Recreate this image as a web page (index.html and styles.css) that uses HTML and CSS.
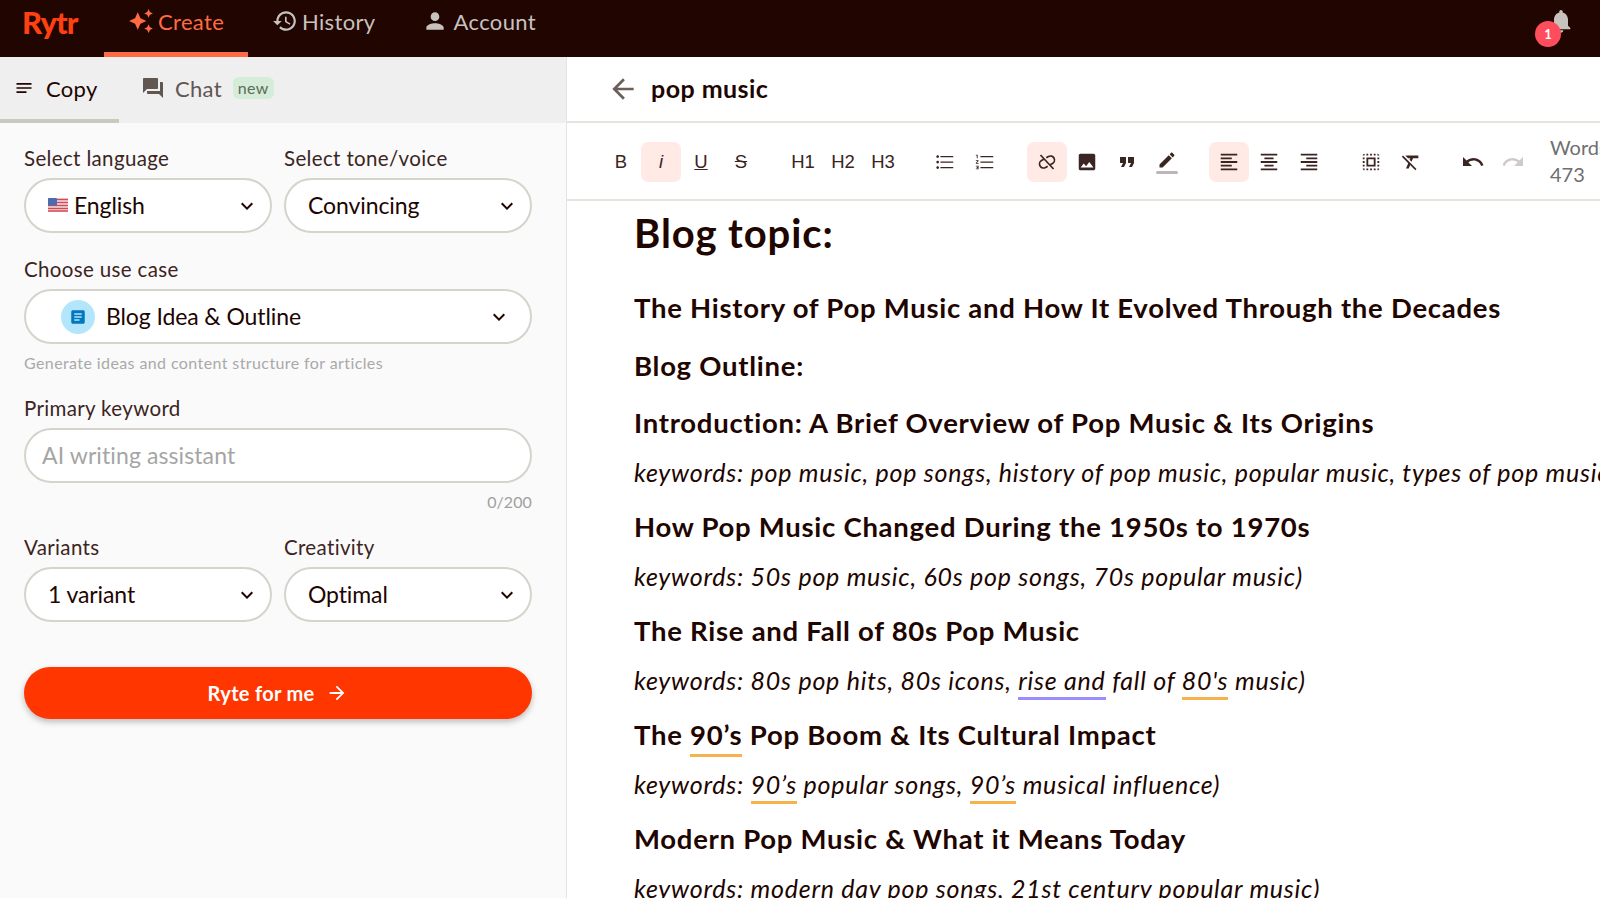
FILE: index.html
```
<!DOCTYPE html>
<html lang="en">
<head>
<meta charset="utf-8">
<title>Rytr</title>
<link rel="stylesheet" href="styles.css">
</head>
<body>
<header class="topbar">
  <div class="logo">Rytr</div>
  <nav class="mainnav">
    <a class="navitem active"><svg class="ic26" viewBox="0 0 24 24"><path d="M19 9l1.25-2.75L23 5l-2.75-1.25L19 1l-1.25 2.75L15 5l2.75 1.25L19 9zm-7.5.5L9 4 6.5 9.5 1 12l5.5 2.5L9 20l2.5-5.5L17 12l-5.5-2.5zM19 15l-1.25 2.75L15 19l2.75 1.25L19 23l1.25-2.75L23 19l-2.75-1.25L19 15z"/></svg>Create</a>
    <a class="navitem"><svg class="ic26" viewBox="0 0 24 24"><path d="M13 3c-4.97 0-9 4.03-9 9H1l3.89 3.89.07.14L9 12H6c0-3.87 3.13-7 7-7s7 3.13 7 7-3.13 7-7 7c-1.93 0-3.68-.79-4.94-2.06l-1.42 1.42C8.27 19.99 10.51 21 13 21c4.97 0 9-4.03 9-9s-4.03-9-9-9zm-1 5v5l4.28 2.54.72-1.21-3.5-2.08V8H12z"/></svg>History</a>
    <a class="navitem acct"><svg class="ic26" viewBox="0 0 24 24"><path d="M12 12c2.21 0 4-1.79 4-4s-1.79-4-4-4-4 1.79-4 4 1.79 4 4 4zm0 2c-2.67 0-8 1.34-8 4v2h16v-2c0-2.66-5.33-4-8-4z"/></svg>Account</a>
  </nav>
  <div class="bell">
    <svg class="bellicon" viewBox="0 0 24 24"><path d="M12 22c1.1 0 2-.9 2-2h-4c0 1.1.89 2 2 2zm6-6v-5c0-3.07-1.64-5.64-4.5-6.32V4c0-.83-.67-1.5-1.5-1.5s-1.5.67-1.5 1.5v.68C7.63 5.36 6 7.92 6 11v5l-2 2v1h16v-1l-2-2z"/></svg>
    <span class="badge">1</span>
  </div>
</header>
<div class="app">
  <aside class="side">
    <div class="subtabs">
      <a class="subtab on"><svg class="ic20" viewBox="0 0 24 24"><path d="M3 18h12v-2H3v2zM3 6v2h18V6H3zm0 7h18v-2H3v2z"/></svg>Copy</a>
      <a class="subtab"><svg class="ic24" viewBox="0 0 24 24"><path d="M21 6h-2v9H6v2c0 .55.45 1 1 1h11l4 4V7c0-.55-.45-1-1-1zm-4 6V3c0-.55-.45-1-1-1H3c-.55 0-1 .45-1 1v14l4-4h10c.55 0 1-.45 1-1z"/></svg>Chat<span class="new">new</span></a>
    </div>
    <form class="form">
      <div class="row">
        <div class="field">
          <label class="lbl">Select language</label>
          <div class="pill"><svg class="flag" viewBox="0 0 20 14"><rect width="20" height="14" rx="1.5" fill="#e8e4ea"/><path d="M0 1.5h20M0 4.5h20M0 7.500h20M0 10.500h20M0 13h20" stroke="#d9474f" stroke-width="1.500"/><rect width="9" height="7.500" rx="1" fill="#4a6cb0"/></svg><span>English</span><svg class="chev" viewBox="0 0 24 24"><path d="M16.590 8.590L12 13.170 7.410 8.590 6 10l6 6 6-6z"/></svg></div>
        </div>
        <div class="field">
          <label class="lbl">Select tone/voice</label>
          <div class="pill"><span>Convincing</span><svg class="chev" viewBox="0 0 24 24"><path d="M16.590 8.590L12 13.170 7.410 8.590 6 10l6 6 6-6z"/></svg></div>
        </div>
      </div>
      <div class="field gap1">
        <label class="lbl">Choose use case</label>
        <div class="pill usecase"><span class="round"><svg class="ic18" viewBox="0 0 24 24"><path d="M19 3H5c-1.100 0-2 .9-2 2v14c0 1.100.9 2 2 2h14c1.100 0 2-.9 2-2V5c0-1.100-.9-2-2-2zm-5 14H7v-2h7v2zm3-4H7v-2h10v2zm0-4H7V7h10v2z"/></svg></span><span>Blog Idea &amp; Outline</span><svg class="chev" viewBox="0 0 24 24"><path d="M16.590 8.590L12 13.170 7.410 8.590 6 10l6 6 6-6z"/></svg></div>
        <div class="help">Generate ideas and content structure for articles</div>
      </div>
      <div class="field gap2">
        <label class="lbl">Primary keyword</label>
        <div class="pill keyword">AI writing assistant</div>
        <div class="count">0/200</div>
      </div>
      <div class="row gap2">
        <div class="field">
          <label class="lbl">Variants</label>
          <div class="pill"><span>1 variant</span><svg class="chev" viewBox="0 0 24 24"><path d="M16.590 8.590L12 13.170 7.410 8.590 6 10l6 6 6-6z"/></svg></div>
        </div>
        <div class="field">
          <label class="lbl">Creativity</label>
          <div class="pill"><span>Optimal</span><svg class="chev" viewBox="0 0 24 24"><path d="M16.590 8.590L12 13.170 7.410 8.590 6 10l6 6 6-6z"/></svg></div>
        </div>
      </div>
      <div class="cta">Ryte for me<svg class="ic22" viewBox="0 0 24 24"><path d="M12 4l-1.410 1.410L16.170 11H4v2h12.170l-5.580 5.590L12 20l8-8z"/></svg></div>
    </form>
  </aside>
  <main class="doc">
    <div class="dochead"><svg class="back" viewBox="0 0 24 24"><path d="M20 11H7.830l5.590-5.590L12 4l-8 8 8 8 1.410-1.410L7.830 13H20v-2z"/></svg><h2 class="doctitle">pop music</h2></div>
    <div class="toolbar">
      <div class="grp">
        <span class="tb">B</span><span class="tb sel it">i</span><span class="tb ul">U</span><span class="tb st">S</span>
      </div>
      <div class="grp">
        <span class="tb">H1</span><span class="tb">H2</span><span class="tb">H3</span>
      </div>
      <div class="grp">
        <span class="tb"><svg class="ic22" viewBox="0 0 24 24"><path d="M4 10.500c-.83 0-1.500.67-1.500 1.500s.67 1.500 1.500 1.500 1.500-.67 1.500-1.500-.67-1.500-1.500-1.500zm0-6c-.83 0-1.500.67-1.500 1.500S3.170 7.500 4 7.500 5.500 6.830 5.500 6 4.830 4.500 4 4.500zm0 12c-.83 0-1.500.68-1.500 1.500s.68 1.500 1.500 1.500 1.500-.68 1.500-1.500-.67-1.500-1.500-1.500zM7 18.800h14v-1.300H7v1.300zm0-6h14v-1.300H7v1.300zm0-7.300v1.300h14V5.500H7z"/></svg></span>
        <span class="tb"><svg class="ic22" viewBox="0 0 24 24"><path d="M2 17h2v.5H3v1h1v.5H2v1h3v-4H2v1zm1-9h1V4H2v1h1v3zm-1 3h1.800L2 13.100v.9h3v-1H3.200L5 10.900V10H2v1zm5-5.500v1.300h14V5.500H7zm0 13.300h14v-1.300H7v1.300zm0-6h14v-1.300H7v1.300z"/></svg></span>
      </div>
      <div class="grp">
        <span class="tb sel"><svg class="ic24 strokeic" viewBox="0 0 24 24"><g transform="rotate(-30 12 12)"><path d="M10.500 8H8a4 4 0 0 0 0 8h2.500"/><path d="M13.500 8H16a4 4 0 0 1 0 8h-2.500"/></g><path d="M5.500 5l13 14"/></svg></span>
        <span class="tb"><svg class="ic22" viewBox="0 0 24 24"><path d="M21 19V5c0-1.100-.9-2-2-2H5c-1.100 0-2 .9-2 2v14c0 1.100.9 2 2 2h14c1.100 0 2-.9 2-2zM8.500 13.500l2.500 3.010L14.500 12l4.500 6H5l3.500-4.500z"/></svg></span>
        <span class="tb"><svg class="ic24" viewBox="0 0 24 24"><path d="M6 17h3l2-4V7H5v6h3zm8 0h3l2-4V7h-6v6h3z"/></svg></span>
        <span class="tb pen"><svg class="ic20" viewBox="0 0 24 24"><path d="M3 17.250V21h3.750L17.810 9.940l-3.750-3.750L3 17.250zM20.710 7.040c.39-.39.39-1.020 0-1.410l-2.340-2.340c-.39-.39-1.020-.39-1.410 0l-1.830 1.830 3.750 3.750 1.830-1.830z"/></svg><i class="penbar"></i></span>
      </div>
      <div class="grp">
        <span class="tb sel"><svg class="ic22" viewBox="0 0 24 24"><path d="M15 15H3v2h12v-2zm0-8H3v2h12V7zM3 13h18v-2H3v2zm0 8h18v-2H3v2zM3 3v2h18V3H3z"/></svg></span>
        <span class="tb"><svg class="ic22" viewBox="0 0 24 24"><path d="M7 15v2h10v-2H7zm-4 6h18v-2H3v2zm0-8h18v-2H3v2zm4-6v2h10V7H7zM3 3v2h18V3H3z"/></svg></span>
        <span class="tb"><svg class="ic22" viewBox="0 0 24 24"><path d="M3 21h18v-2H3v2zm6-4h12v-2H9v2zm-6-4h18v-2H3v2zm6-4h12V7H9v2zM3 3v2h18V3H3z"/></svg></span>
      </div>
      <div class="grp">
        <span class="tb"><svg class="ic22" viewBox="0 0 24 24"><path d="M3 5h2V3c-1.100 0-2 .9-2 2zm0 8h2v-2H3v2zm4 8h2v-2H7v2zM3 9h2V7H3v2zm10-6h-2v2h2V3zm6 0v2h2c0-1.100-.9-2-2-2zM5 21v-2H3c0 1.100.9 2 2 2zm-2-4h2v-2H3v2zM9 3H7v2h2V3zm2 18h2v-2h-2v2zm8-8h2v-2h-2v2zm0 8c1.100 0 2-.9 2-2h-2v2zm0-12h2V7h-2v2zm0 8h2v-2h-2v2zm-4 4h2v-2h-2v2zm0-16h2V3h-2v2zM7 17h10V7H7v10zm2-8h6v6H9V9z"/></svg></span>
        <span class="tb"><svg class="ic22" viewBox="0 0 24 24"><path d="M3.270 5L2 6.270l6.970 6.970L6.500 19h3l1.570-3.660L16.730 21 18 19.730 3.550 5.270 3.270 5zM6 5v.18L8.820 8h2.400l-.72 1.680 2.100 2.100L14.210 8H20V5H6z"/></svg></span>
      </div>
      <div class="grp">
        <span class="tb"><svg class="ic24" viewBox="0 0 24 24"><path d="M12.500 8c-2.650 0-5.050.99-6.900 2.600L2 7v9h9l-3.620-3.620c1.390-1.160 3.160-1.880 5.120-1.880 3.540 0 6.550 2.310 7.600 5.500l2.370-.78C21.080 11.030 17.150 8 12.500 8z"/></svg></span>
        <span class="tb off"><svg class="ic24" viewBox="0 0 24 24"><path d="M18.400 10.600C16.550 8.990 14.150 8 11.500 8c-4.650 0-8.580 3.030-9.960 7.220L3.900 16c1.050-3.190 4.050-5.500 7.600-5.500 1.950 0 3.730.72 5.120 1.880L13 16h9V7l-3.600 3.600z"/></svg></span>
      </div>
      <div class="words">Words<br>473</div>
    </div>
    <article class="content">
      <h1>Blog topic:</h1>
      <h3>The History of Pop Music and How It Evolved Through the Decades</h3>
      <h3>Blog Outline:</h3>
      <h3>Introduction: A Brief Overview of Pop Music &amp; Its Origins</h3>
      <p>keywords: pop music, pop songs, history of pop music, popular music, types of pop music)</p>
      <h3>How Pop Music Changed During the 1950s to 1970s</h3>
      <p>keywords: 50s pop music, 60s pop songs, 70s popular music)</p>
      <h3>The Rise and Fall of 80s Pop Music</h3>
      <p>keywords: 80s pop hits, 80s icons, <span class="gb">rise and</span> fall of <span class="gy">80's</span> music)</p>
      <h3>The <span class="gy">90’s</span> Pop Boom &amp; Its Cultural Impact</h3>
      <p>keywords: <span class="gy">90’s</span> popular songs, <span class="gy">90’s</span> musical influence)</p>
      <h3>Modern Pop Music &amp; What it Means Today</h3>
      <p>keywords: modern day pop songs, 21st century popular music)</p>
    </article>
  </main>
</div>
</body>
</html>
```
FILE: styles.css
```
* { box-sizing: border-box; }
html, body { margin: 0; height: 100%; overflow: hidden; }
body { font-family: "Lato", "Noto Sans", sans-serif; color: #200500; background: #fff; display: flex; flex-direction: column; height: 898px; }
svg { fill: currentColor; flex: none; display: block; }
.ic18 { width: 18px; height: 18px; }
.ic20 { width: 20px; height: 20px; }
.ic22 { width: 22px; height: 22px; }
.ic24 { width: 24px; height: 24px; }
.ic26 { width: 26px; height: 26px; }
.strokeic { fill: none; stroke: currentColor; stroke-width: 1.7; }

.topbar { height: 57px; flex: none; background: #200500; display: flex; align-items: stretch; position: relative; }
.logo { width: 104px; padding: 2px 0 0 22px; font-size: 31px; font-weight: 900; color: #ff4010; letter-spacing: -1px; line-height: 40px; }
.mainnav { display: flex; }
.navitem { display: flex; align-items: center; gap: 4px; padding: 0 24px; font-size: 22px; color: #c8c2be; height: 57px; padding-bottom: 15px; letter-spacing: .35px; }
.navitem.active { color: #ff6b42; border-bottom: 5px solid #ff6b42; padding-bottom: 10px; width: 144px; }
.acct { gap: 6px; margin-left: -2px; }
.bell { position: absolute; left: 1547px; top: 7px; width: 40px; height: 40px; color: #c8c2be; }
.bellicon { width: 28px; height: 28px; position: absolute; left: 0; top: 0; }
.badge { position: absolute; left: -12px; top: 14px; width: 26px; height: 26px; border-radius: 50%; background: #ff4d5e; color: #fff; font-size: 13px; font-weight: 700; display: flex; align-items: center; justify-content: center; }

.app { flex: 1; display: flex; min-height: 0; }
.side { width: 567px; flex: none; background: #fafafa; border-right: 1px solid #e6e4df; display: flex; flex-direction: column; }
.subtabs { height: 66px; flex: none; background: #efefef; display: flex; position: relative; }
.subtab { display: flex; align-items: center; gap: 10px; font-size: 22px; color: #615650; padding-bottom: 4px; margin-left: 22px; letter-spacing: .3px; }
.subtab.on { color: #200500; width: 119px; margin-left: 0; padding-left: 14px; gap: 12px; border-bottom: 4px solid #c9c9bd; padding-bottom: 0; }
.new { background: #d5ecd8; color: #5c6b5a; font-size: 16px; padding: 2px 5px; border-radius: 6px; margin-left: 1px; line-height: 18px; }

.form { padding: 23px 34px 0 24px; display: flex; flex-direction: column; }
.row { display: flex; gap: 12px; }
.row .field { width: 248px; }
.field { display: flex; flex-direction: column; }
.lbl { font-size: 20.500px; line-height: 24px; margin-bottom: 8px; color: #3b2522; letter-spacing: .35px; }
.pill { height: 55px; border: 2px solid #d5d3cb; border-radius: 28px; background: #fff; display: flex; align-items: center; padding: 0 11px 2px 22px; font-size: 23px; color: #200500; letter-spacing: -.1px; }
.pill > span:not(.round) { flex: 1; }
.chev { width: 24px; height: 24px; margin-top: 2px; }
.flag { width: 20px; height: 14px; margin-right: 6px; }
.gap1 { margin-top: 24px; }
.usecase { padding-left: 35px; padding-right: 19px; }
.round { width: 34px; height: 34px; border-radius: 50%; background: #b3e5fc; color: #0277bd; display: flex; align-items: center; justify-content: center; margin: 2px 11px 0 0; }
.help { font-size: 16px; color: #a9a9a9; margin-top: 9px; line-height: 20px; letter-spacing: .4px; }
.gap2 { margin-top: 23px; }
.keyword { color: #a5a5a5; padding-left: 16px; letter-spacing: .1px; }
.count { align-self: flex-end; font-size: 16px; color: #a0a0a0; margin-top: 9px; line-height: 20px; letter-spacing: .1px; }
.cta { margin-top: 45px; height: 52px; border-radius: 26px; background: #ff3600; color: #fff; font-size: 20px; font-weight: 700; letter-spacing: .3px; display: flex; align-items: center; justify-content: center; gap: 12px; box-shadow: 0 3px 6px rgba(0,0,0,.25); }

.doc { flex: 1; min-width: 0; display: flex; flex-direction: column; overflow: hidden; }
.dochead { height: 66px; flex: none; display: flex; align-items: center; gap: 12px; padding: 0 0 0 40px; border-bottom: 2px solid #e6e4df; }
.back { width: 32px; height: 32px; color: #6b5f5a; }
.doctitle { margin: 0; font-size: 25px; font-weight: 700; letter-spacing: .45px; position: relative; top: -1px; }
.toolbar { height: 78px; flex: none; display: flex; align-items: center; gap: 22px; padding: 1px 0 0 34px; border-bottom: 2px solid #e6e4df; }
.grp { display: flex; }
.tb { width: 40px; height: 40px; border-radius: 7px; display: flex; align-items: center; justify-content: center; font-family: "Liberation Sans", sans-serif; font-size: 18.500px; color: #3a2522; }
.sel { background: #ffeae6; }
.it { font-style: italic; }
.ul { text-decoration: underline; }
.st { text-decoration: line-through; }
.off { color: #cfcac8; }
.pen { flex-direction: column; gap: 1px; }
.penbar { width: 22px; height: 3px; border-radius: 2px; background: #bdb6b4; }
.words { margin-left: -5px; padding-bottom: 2px; font-size: 20px; line-height: 27px; color: #6f6f6f; white-space: nowrap; }

.content { padding: 7px 0 0 67px; white-space: nowrap; }
h1 { margin: 0 0 32px; font-size: 40px; line-height: 50px; font-weight: 700; letter-spacing: .9px; }
h3 { margin: 0; font-size: 27.500px; line-height: 36px; font-weight: 700; letter-spacing: .73px; }
h3 + h3 { margin-top: 21.500px; }
p { margin: 13px 0 19px; font-size: 25px; line-height: 36px; font-style: italic; letter-spacing: .75px; }
.gy { border-bottom: 3px solid #f7b24c; padding-bottom: 2px; }
.gb { border-bottom: 3px solid #9b8cff; padding-bottom: 2px; }
h3 .gy { padding-bottom: 3px; }
```
